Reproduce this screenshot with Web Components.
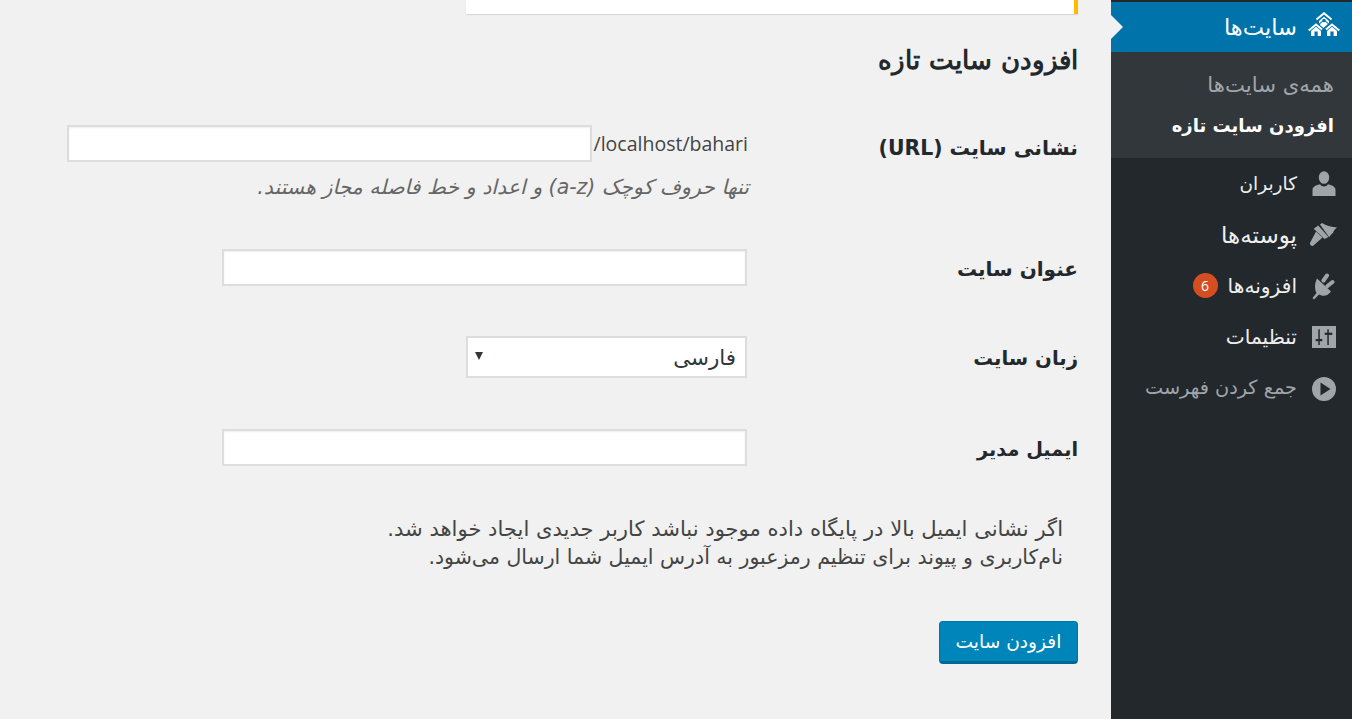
<!DOCTYPE html>
<html lang="fa" dir="rtl">
<head>
<meta charset="utf-8">
<title>افزودن سایت تازه</title>
<style>
  html, body { margin: 0; padding: 0; height: 100%; }
  body { background: #f1f1f1; font-family: "DejaVu Sans", "Noto Sans", sans-serif; overflow: hidden; }
</style>
</head>
<body>
<wp-admin>
  <wp-sidebar slot="side">
    <wp-menu-item icon="sites" size="22.600" current>سایت‌ها</wp-menu-item>
    <wp-submenu>
      <wp-sub-item size="21.200">همه‌ی سایت‌ها</wp-sub-item>
      <wp-sub-item size="18" current>افزودن سایت تازه</wp-sub-item>
    </wp-submenu>
    <wp-menu-item icon="users" size="18.500">کاربران</wp-menu-item>
    <wp-menu-item icon="brush" size="23">پوسته‌ها</wp-menu-item>
    <wp-menu-item icon="plug" size="20.200" badge="6">افزونه‌ها</wp-menu-item>
    <wp-menu-item icon="settings" size="20.200">تنظیمات</wp-menu-item>
    <wp-menu-item icon="collapse" size="19.300" muted>جمع کردن فهرست</wp-menu-item>
  </wp-sidebar>
  <wp-notice></wp-notice>
  <wp-heading>افزودن سایت تازه</wp-heading>
  <wp-row label="نشانی سایت (URL)" gap="45" size="20.400" pad="9">
    <wp-text-input></wp-text-input>
    <span slot="suffix">/localhost/bahari</span>
    <span slot="desc">تنها حروف کوچک (a-z) و اعداد و خط فاصله مجاز هستند.</span>
  </wp-row>
  <wp-row label="عنوان سایت" gap="49" size="20" pad="6"><wp-text-input></wp-text-input></wp-row>
  <wp-row label="زبان سایت" gap="50" size="19.700" pad="9"><wp-select>فارسی</wp-select></wp-row>
  <wp-row label="ایمیل مدیر" gap="51" size="19.300" pad="7"><wp-text-input></wp-text-input></wp-row>
  <wp-note>
    <div style="font-size:21.100px">اگر نشانی ایمیل بالا در پایگاه داده موجود نباشد کاربر جدیدی ایجاد خواهد شد.</div>
    <div style="font-size:20.500px">نام‌کاربری و پیوند برای تنظیم رمزعبور به آدرس ایمیل شما ارسال می‌شود.</div>
  </wp-note>
  <wp-button>افزودن سایت</wp-button>
</wp-admin>

<script>
(function () {

  const ICONS = {
    sites: `<svg style="width:32px;height:24px;transform:translateY(-3px)" viewBox="0 0 32 24"><g fill="none" stroke="#fff" stroke-width="2"><path d="M8.500 7.500L16 1.200l7.500 6.300"/><path d="M.7 18.500L8 12.500l6 5"/><path d="M31.300 18.500L24 12.500l-6 5"/></g><g fill="#fff"><path d="M11 9l5-4.200L21 9v2.500l-5-4-5 4z"/><path d="M12 12l4-3.300 4 3.300-4.500 4-3-2.500z"/><path d="M3 19l5-4.200 5 4.200v5H3zM19 19l5-4.200 5 4.200v5H19z"/></g><g fill="#0073aa"><circle cx="16" cy="8.500" r="1.700"/><rect x="6.500" y="19.500" width="3.200" height="4.500"/><rect x="22.400" y="19.500" width="3.200" height="4.500"/></g></svg>`,
    users: `<svg style="width:24px;height:25px" viewBox="0 0 24 25" fill="currentColor"><ellipse cx="12" cy="6.500" rx="5.200" ry="6.300"/><path d="M.5 25v-6c0-3 2.500-4.800 7.500-5.800 1 1.500 2.500 2.200 4 2.200s3-.7 4-2.200c5 1 7.500 2.800 7.500 5.800v6z"/></svg>`,
    brush: `<svg style="width:28px;height:24px;transform:translateY(-1px)" viewBox="8 5 28 24" fill="currentColor"><path d="M18 7.500L20 6c5 3 10 4 15 4.500-2 1.500-3.500 3.500-4 5.500-1.500 1-2.500 2.500-4 4z"/><path d="M11.700 11.700L16.200 8.600 26.500 20l-4 2z"/><path d="M14 14.500l6.500 6L12 28a2.300 2.300 0 0 1-3.500-3z"/></svg>`,
    plug: `<svg style="width:24px;height:27px;transform:translateY(1px)" viewBox="8 5 24 27" fill="currentColor"><path d="M23 7.500l-3.500 5M28.500 14l-5 4" stroke="currentColor" stroke-width="4" stroke-linecap="round"/><path d="M13 10.500l14 13c-2.500 3.500-6 5-9.500 4L15 26.500l-5 5L8.500 30l4-5c-2-4-2-9.500.5-14.500z"/></svg>`,
    settings: `<svg style="width:24px;height:22px" viewBox="0 0 24 22"><rect width="24" height="22" fill="currentColor"/><g fill="#23282d"><rect x="6.300" y="3.300" width="1.500" height="15.700"/><rect x="3.700" y="13" width="6.600" height="2.200"/><rect x="15.300" y="3.300" width="1.500" height="15.700"/><rect x="12.700" y="6.700" width="7.600" height="2.200"/></g></svg>`,
    collapse: `<svg style="width:24px;height:24px;transform:translateY(1px)" viewBox="0 0 24 24"><circle cx="12" cy="12" r="12" fill="currentColor"/><path d="M8.500 5.500l10 6.500-10 6.500z" fill="#23282d"/></svg>`,
  };

  function define(name, css, html) {
    customElements.define(name, class extends HTMLElement {
      constructor() {
        super();
        this.attachShadow({mode: 'open'});
        this.shadowRoot.innerHTML = `<style>${css}</style>${html}`;
      }
    });
  }

  // page frame: sidebar on the right, form column on the left
  define('wp-admin', `
    :host { display: flex; flex-direction: row; height: 719px; }
    .side { flex: 0 0 241px; }
    .main { flex: 1; padding: 0 33px 0 0; display: block; }
  `, `<div class="side"><slot name="side"></slot></div><div class="main"><slot></slot></div>`);

  define('wp-sidebar', `
    :host { display: block; background: #23282d; height: 719px; box-sizing: border-box; padding-top: 2px; color: #eee; }
  `, `<slot></slot>`);

  class MenuItem extends HTMLElement {
    constructor() {
      super();
      this.attachShadow({mode: 'open'});
      const icon = this.getAttribute('icon');
      const badge = this.getAttribute('badge');
      const size = this.getAttribute('size') || 18;
      this.shadowRoot.innerHTML = `
        <style>
          :host { display: flex; align-items: center; height: 51px; box-sizing: border-box; padding-right: 14px; color: #eee; font-size: ${size}px; position: relative; }
          :host([current]) { height: 50px; background: #0073aa; color: #fff; }
          :host([muted]) { color: #a0a5aa; }
          .icon { flex: 0 0 28px; width: 28px; margin-left: 13px; color: #a0a5aa; display: flex; justify-content: center; align-items: center; }
          :host([current]) .icon { color: #fff; }
          svg { display: block; flex: none; }
          .text { line-height: 30px; height: 30px; white-space: nowrap; }
          .badge { width: 25px; height: 25px; border-radius: 50%; background: #d54e21; color: #fff; font: 14px/25px "Open Sans", sans-serif; text-align: center; margin-right: 10px; }
          .arrow { position: absolute; left: 0; top: 50%; margin-top: -12px; border: 12px solid transparent; border-left: 12px solid #f1f1f1; border-right: 0; }
        </style>
        <span class="icon">${ICONS[icon]}</span>
        <span class="text"><slot></slot></span>
        ${badge ? `<span class="badge">${badge}</span>` : ''}
        ${this.hasAttribute('current') ? '<span class="arrow"></span>' : ''}
      `;
    }
  }
  customElements.define('wp-menu-item', MenuItem);

  define('wp-submenu', `
    :host { display: block; background: #32373c; padding: 12px 0; }
  `, `<slot></slot>`);

  class SubItem extends HTMLElement {
    constructor() {
      super();
      this.attachShadow({mode: 'open'});
      this.shadowRoot.innerHTML = `
        <style>
          :host { display: block; height: 41px; line-height: 41px; overflow: hidden; padding-right: 18px; color: #a0a5aa; font-size: ${this.getAttribute('size')}px; white-space: nowrap; }
          :host([current]) { color: #fff; font-weight: 700; }
        </style>
        <slot></slot>
      `;
    }
  }
  customElements.define('wp-sub-item', SubItem);

  define('wp-notice', `
    :host { display: block; width: 608px; height: 14px; background: #fff; border-right: 4px solid #ffb900; box-shadow: 0 1px 1px rgba(0,0,0,.1); }
  `, ``);

  define('wp-heading', `
    :host { display: block; margin-top: 26px; height: 40px; font: 700 25.700px/40px "DejaVu Serif", serif; color: #23282d; white-space: nowrap; }
  `, `<slot></slot>`);

  class Row extends HTMLElement {
    constructor() {
      super();
      this.attachShadow({mode: 'open'});
      const gap = this.getAttribute('gap') || 50;
      const pad = this.getAttribute('pad') || 7;
      this.shadowRoot.innerHTML = `
        <style>
          :host { display: grid; grid-template-columns: 328px 1fr; margin-top: ${gap}px; color: #23282d; }
          .label { font-weight: 700; font-size: ${this.getAttribute('size')}px; height: 28px; padding-top: ${pad}px; line-height: 28px; white-space: nowrap; }
          .line { display: flex; align-items: flex-start; }
          ::slotted([slot=suffix]) { color: #444; font: 19.500px/36px "Open Sans", sans-serif; direction: ltr; margin: 0 -1px 0 2px; padding-top: 1px; }
          ::slotted([slot=desc]) { display: block; height: 26px; margin-top: 12px; line-height: 26px; font-style: italic; font-size: 20.500px; color: #666; white-space: nowrap; margin-right: -2px; }
          .field { padding-right: 3px; }
        </style>
        <div class="label">${this.getAttribute('label')}</div>
        <div class="field">
          <div class="line"><slot name="suffix"></slot><slot></slot></div>
          <slot name="desc"></slot>
        </div>
      `;
    }
  }
  customElements.define('wp-row', Row);

  define('wp-text-input', `
    :host { display: block; width: 525px; height: 37px; box-sizing: border-box; background: #fff; border: 2px solid #ddd; box-shadow: inset 0 1px 2px rgba(0,0,0,.07); }
  `, ``);

  define('wp-select', `
    :host { display: flex; align-items: center; position: relative; width: 281px; height: 42px; box-sizing: border-box; background: #fff; border: 2px solid #ddd; padding: 0 9px; font-size: 21.400px; color: #32373c; }
    .arrow { position: absolute; left: 7px; top: 14px; border: 4.500px solid transparent; border-top: 8px solid #32373c; border-bottom: 0; }
  `, `<slot></slot><span class="arrow"></span>`);

  define('wp-note', `
    :host { display: block; margin-top: 49px; padding-right: 15px; font-size: 21px; line-height: 28px; color: #444; white-space: nowrap; }
    ::slotted(div) { height: 28px; }
  `, `<slot></slot>`);

  define('wp-button', `
    :host { display: flex; margin-top: 50px; width: 139px; height: 43px; box-sizing: border-box; align-items: center; justify-content: center; background: #0085ba; border: 1px solid #0073aa; border-bottom: 3px solid #006799; border-radius: 4px; color: #fff; font-size: 18.600px; white-space: nowrap; }
  `, `<slot></slot>`);

})();
</script>
</body>
</html>
